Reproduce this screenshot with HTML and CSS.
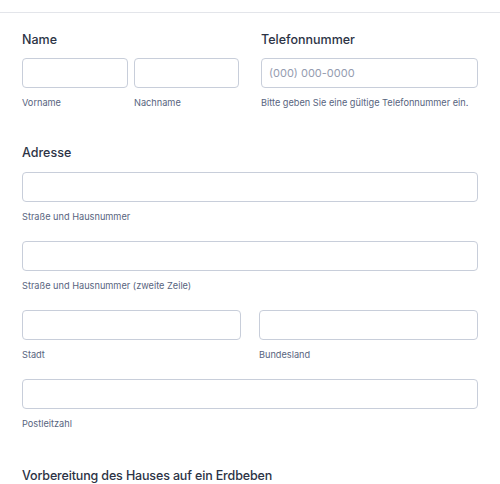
FILE: index.html
```html
<!DOCTYPE html>
<html lang="de">
<head>
<meta charset="utf-8">
<link rel="stylesheet" href="styles.css">
</head>
<body>
<div class="divider"></div>
<form class="form">
  <div class="row two">
    <div class="field">
      <label class="label">Name</label>
      <div class="pair">
        <div class="sub">
          <input class="input" type="text">
          <span class="hint">Vorname</span>
        </div>
        <div class="sub">
          <input class="input" type="text">
          <span class="hint">Nachname</span>
        </div>
      </div>
    </div>
    <div class="field">
      <label class="label">Telefonnummer</label>
      <div class="sub">
        <input class="input" type="text" placeholder="(000) 000-0000">
        <span class="hint">Bitte geben Sie eine gültige Telefonnummer ein.</span>
      </div>
    </div>
  </div>

  <div class="field address">
    <label class="label">Adresse</label>
    <div class="sub">
      <input class="input" type="text">
      <span class="hint">Straße und Hausnummer</span>
    </div>
    <div class="sub">
      <input class="input" type="text">
      <span class="hint">Straße und Hausnummer (zweite Zeile)</span>
    </div>
    <div class="city">
      <div class="sub">
        <input class="input" type="text">
        <span class="hint">Stadt</span>
      </div>
      <div class="sub">
        <input class="input" type="text">
        <span class="hint">Bundesland</span>
      </div>
    </div>
    <div class="sub">
      <input class="input" type="text">
      <span class="hint">Postleitzahl</span>
    </div>
  </div>

  <h2 class="heading">Vorbereitung des Hauses auf ein Erdbeben</h2>
</form>
</body>
</html>
```

FILE: styles.css
```css
* { box-sizing: border-box; }
html, body {
  margin: 0;
  padding: 0;
  background: #ffffff;
  font-family: Inter, "Noto Sans", "Liberation Sans", sans-serif;
  color: #2c3345;
}
body { padding-top: 12px; overflow: hidden; }
.divider {
  height: 1px;
  background: #e3e5ea;
}
.form {
  padding: 18px 22px 0 22px;
}
.row.two {
  display: grid;
  grid-template-columns: 217px 217px;
  column-gap: 22px;
}
.field {
  display: flex;
  flex-direction: column;
}
.label {
  font-size: 12.5px;
  line-height: 18px;
  font-weight: 500;
  color: #2c3345;
  margin-bottom: 9px;
}
.pair {
  display: grid;
  grid-template-columns: 106px 105px;
  column-gap: 6px;
}
.sub {
  display: flex;
  flex-direction: column;
}
.input {
  height: 30px;
  width: 100%;
  border: 1px solid #c8ceda;
  border-radius: 4px;
  background: #fff;
  padding: 0 7px;
  font-family: inherit;
  font-size: 11px;
  color: #2c3345;
  outline: none;
  margin: 0;
}
.input::placeholder { color: #959cb0; }
.hint {
  margin-top: 8px;
  font-size: 9.2px;
  line-height: 14px;
  color: #57647e;
  white-space: nowrap;
}
.address { margin-top: 34px; }
.address > .sub,
.address > .city { margin-bottom: 17px; }
.address > .label { margin-bottom: 10px; }
.city {
  display: grid;
  grid-template-columns: 219px 219px;
  column-gap: 18px;
}
.heading {
  margin: 18px 0 0 0;
  font-size: 12.5px;
  line-height: 20px;
  font-weight: 500;
  letter-spacing: -0.15px;
  color: #2c3345;
}
```
